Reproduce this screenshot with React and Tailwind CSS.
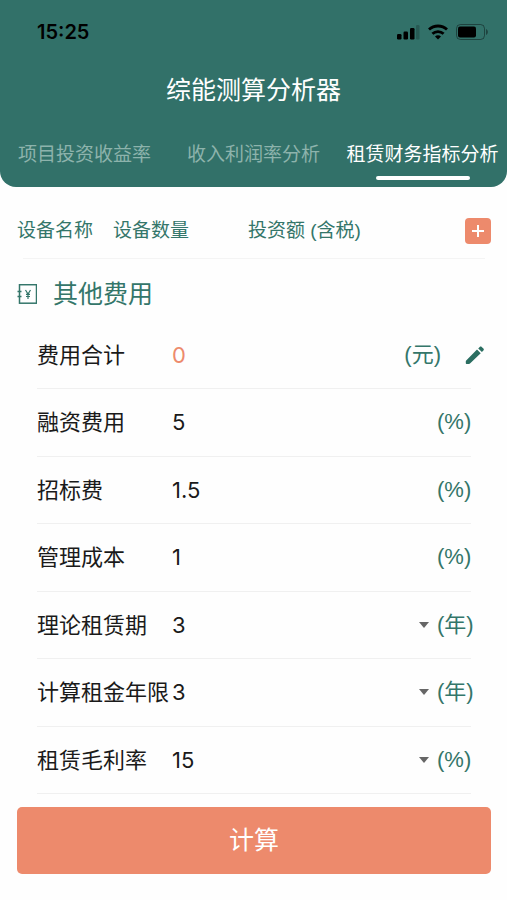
import { useState } from 'react';

const tabs = ['项目投资收益率', '收入利润率分析', '租赁财务指标分析'];

const fields = [
    { id: 'financing', label: '融资费用', value: '5', unit: '(%)' },
    { id: 'bidding', label: '招标费', value: '1.5', unit: '(%)' },
    { id: 'management', label: '管理成本', value: '1', unit: '(%)' },
    { id: 'leaseTerm', label: '理论租赁期', value: '3', unit: '(年)', options: ['1', '2', '3', '4', '5'] },
    { id: 'rentYears', label: '计算租金年限', value: '3', unit: '(年)', options: ['1', '2', '3', '4', '5'] },
    { id: 'grossMargin', label: '租赁毛利率', value: '15', unit: '(%)', options: ['5', '10', '15', '20'] },
];

function StatusIcons() {
    return (
        <div className="flex items-center gap-2">
            <svg className="w-6 h-4" viewBox="0 0 24 16" aria-hidden="true">
                <rect x="1" y="10" width="4.500" height="5.500" rx="1.2" />
                <rect x="7.500" y="7.500" width="4.500" height="8" rx="1.2" />
                <rect x="14" y="4" width="4.500" height="11.500" rx="1.2" />
                <rect x="20" y="1" width="3.500" height="14.500" rx="1.2" opacity="0.2" />
            </svg>
            <svg className="w-5 h-4" viewBox="0 0 20 16" fill="none" stroke="black" strokeWidth="2.8" aria-hidden="true">
                <path d="M1 5.6C6 .8 14 .8 19 5.6" />
                <path d="M4.4 9.8c3.2-3 8-3 11.200 0" />
                <path d="M10 15.500l-3-3c1.700-1.600 4.300-1.600 6 0z" fill="black" stroke="none" />
            </svg>
            <svg className="w-8 h-4" viewBox="0 0 32 16" aria-hidden="true">
                <rect x="0.500" y="0.500" width="28" height="15" rx="4" fill="none" stroke="black" opacity="0.4" />
                <rect x="2" y="2.500" width="18" height="11" rx="2" />
                <path d="M30 5c2.500 1 2.500 5 0 6z" opacity="0.4" />
            </svg>
        </div>
    );
}

function LedgerIcon() {
    return (
        <svg className="w-5 h-5" viewBox="0 0 20 20" fill="none" stroke="currentColor" strokeWidth="1.500" aria-hidden="true">
            <rect x="2.500" y="0.700" width="17" height="18.500" />
            <path d="M0.500 7.500h4M0.500 12.500h4" />
            <path d="M8.500 6l2.500 4 2.500-4M11 10v5M9 10.300h4M9 12.500h4" strokeWidth="1.200" />
        </svg>
    );
}

function PencilIcon() {
    return (
        <svg className="w-5 h-5" viewBox="0 0 20 20" fill="currentColor" aria-hidden="true">
            <path d="M1.200 15.400L12 4.600l3.700 3.700L5 18.500c-.3.300-.6.400-1 .4H1.800c-.6 0-1-.4-1-1v-1.500c0-.4.100-.7.400-1z" />
            <path d="M13.200 3.400l1.500-1.500c.6-.6 1.400-.6 2 0L18.400 3.600c.6.6.6 1.400 0 2l-1.500 1.500z" />
        </svg>
    );
}

function Unit({ children, className = '' }) {
    return (
        <span className={`shrink-0 whitespace-nowrap text-[#34766a] font-['Liberation_Sans','Noto_Sans_CJK_SC',sans-serif] ${className}`}>
            {children}
        </span>
    );
}

function Field({ field }) {
    const [value, setValue] = useState(field.value);
    const onChange = (e) => setValue(e.target.value);

    return (
        <div className="flex items-center border-b border-[#f0f0f0]">
            <label htmlFor={field.id} className="w-[135px] shrink-0 whitespace-nowrap">
                {field.label}
            </label>
            {field.options ? (
                <>
                    <select id={field.id} value={value} onChange={onChange} className="flex-1 min-w-0 appearance-none bg-transparent outline-none">
                        {field.options.map((option) => (
                            <option key={option}>{option}</option>
                        ))}
                    </select>
                    <svg className="w-[10px] h-[6px] mr-2 text-[#666666] pointer-events-none" viewBox="0 0 10 6" fill="currentColor" aria-hidden="true">
                        <path d="M0 0h10L5 6z" />
                    </svg>
                </>
            ) : (
                <input id={field.id} value={value} onChange={onChange} inputMode="decimal" className="flex-1 min-w-0 bg-transparent outline-none" />
            )}
            <Unit className="w-[34px]">{field.unit}</Unit>
        </div>
    );
}

export default function App() {
    const [activeTab, setActiveTab] = useState(2);

    return (
        <div className="min-h-screen flex flex-col bg-[#fefefe] text-[#1a1a1a] font-[Inter,'Noto_Sans_CJK_SC',sans-serif]">
            <header className="bg-[#327169] rounded-b-2xl">
                <div className="flex items-center justify-between h-16 pl-[37px] pr-[19px] text-black">
                    <span className="text-xl font-semibold">15:25</span>
                    <StatusIcons />
                </div>
                <h1 className="pt-2 text-center text-[25px] leading-9 text-white">综能测算分析器</h1>
                <div role="tablist" className="grid grid-cols-3 pt-[33px] pb-[7px]">
                    {tabs.map((tab, index) => (
                        <button
                            key={tab}
                            type="button"
                            role="tab"
                            aria-selected={index === activeTab}
                            onClick={() => setActiveTab(index)}
                            className={`flex flex-col items-center gap-[7px] text-[19px] leading-7 whitespace-nowrap ${index === activeTab ? 'text-white' : 'text-[#8db3ac]'}`}
                        >
                            {tab}
                            <span className={`h-1 w-[94px] rounded-full ${index === activeTab ? 'bg-white' : ''}`} />
                        </button>
                    ))}
                </div>
            </header>

            <main className="flex-1 flex flex-col">
                <section className="pl-[17px] pr-4 pt-[30px]">
                    <div className="flex items-center text-[19px] text-[#34766a] whitespace-nowrap">
                        <span className="w-24">设备名称</span>
                        <span className="w-[135px]">设备数量</span>
                        <span className="flex-1 font-['Liberation_Sans','Noto_Sans_CJK_SC',sans-serif]">投资额 (含税)</span>
                        <button type="button" aria-label="添加设备" className="flex items-center justify-center size-[26px] rounded bg-[#ed8a6c] text-white">
                            <svg className="size-3" viewBox="0 0 12 12" fill="none" stroke="currentColor" strokeWidth="2" aria-hidden="true">
                                <path d="M6 0v12M0 6h12" />
                            </svg>
                        </button>
                    </div>
                    <hr className="mx-[6px] mt-3 border-[#f4f4f4]" />
                    <h2 className="flex items-center gap-4 pt-[17px] text-[25px] leading-9 text-[#34766a]">
                        <LedgerIcon />
                        其他费用
                    </h2>
                </section>

                <form id="fees" className="flex-1 grid grid-cols-1 auto-rows-fr pt-[10px] pl-[37px] pr-9 text-[22px] leading-8" onSubmit={(e) => e.preventDefault()}>
                    <div className="flex items-center border-b border-[#f0f0f0]">
                        <label htmlFor="total" className="w-[135px] shrink-0">费用合计</label>
                        <output id="total" className="flex-1 text-[#ed8a6c]">0</output>
                        <Unit>(元)</Unit>
                        <button type="button" aria-label="编辑费用" className="ml-6 -mr-[14px] text-[#2b6e61]">
                            <PencilIcon />
                        </button>
                    </div>
                    {fields.map((field) => (
                        <Field key={field.id} field={field} />
                    ))}
                </form>
            </main>

            <footer className="pl-[17px] pr-4 pt-[13px] pb-[26px]">
                <button type="submit" form="fees" className="w-full h-[67px] rounded-[5px] bg-[#ed8a6c] text-[25px] text-white">
                    计算
                </button>
            </footer>
        </div>
    );
}
